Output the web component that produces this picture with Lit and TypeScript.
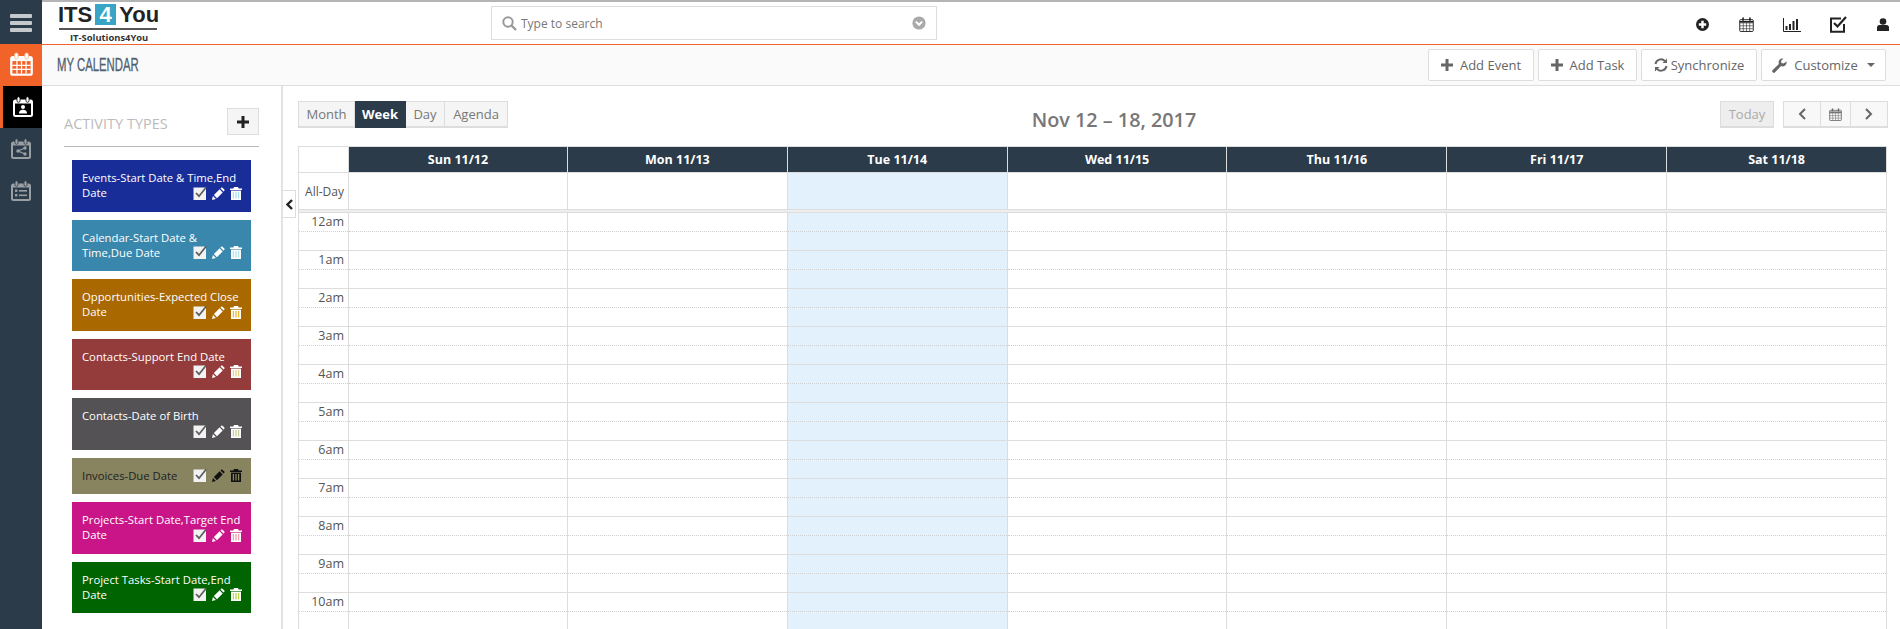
import { LitElement, html, css, svg } from "lit";
import { customElement } from "lit/decorators.js";

const calIcon = (inner: unknown, c: string, s = 22) => html`<svg width=${s} height=${s} viewBox="0 0 22 22" fill="none">
  <rect x="1" y="3.5" width="20" height="17.5" rx="2.5" fill=${c}></rect>
  <rect x="5" y="0.8" width="3" height="5.5" rx="1.5" fill=${c} stroke="currentColor" stroke-width=".8"></rect>
  <rect x="14" y="0.8" width="3" height="5.5" rx="1.5" fill=${c} stroke="currentColor" stroke-width=".8"></rect>
  ${inner}
</svg>`;

const gridInner = svg`<g fill="#f26329"><rect x="3" y="8" width="16" height="11"></rect></g>
  <g stroke="#fff" stroke-width="1.1"><path d="M7 8v11M11 8v11M15 8v11M3 11.7h16M3 15.3h16"></path></g>`;
const personInner = svg`<rect x="3" y="7.500" width="16" height="11.500" fill="#000"></rect>
  <circle cx="11" cy="11" r="2" fill="#fff"></circle><path d="M7 17.500c0-3 2-3.800 4-3.800s4 .8 4 3.800z" fill="#fff"></path>`;
const shareInner = svg`<rect x="3" y="7.500" width="16" height="11.500" fill="#2c3b49"></rect>
  <g stroke="#9a9fa4" stroke-width="1.200"><path d="M15 10l-7 3 7 3"></path></g>
  <circle cx="15" cy="10" r="1.700" fill="#9a9fa4"></circle><circle cx="8" cy="13" r="1.700" fill="#9a9fa4"></circle><circle cx="15" cy="16" r="1.700" fill="#9a9fa4"></circle>`;
const listInner = svg`<rect x="3" y="7.500" width="16" height="11.500" fill="#2c3b49"></rect>
  <g fill="#9a9fa4"><rect x="5" y="9.500" width="2.400" height="2.400"></rect><rect x="9" y="10" width="8" height="1.600"></rect>
  <rect x="5" y="14" width="2.400" height="2.400"></rect><rect x="9" y="14.500" width="8" height="1.600"></rect></g>`;

const plusIcon = (s = 12) => html`<svg width=${s} height=${s} viewBox="0 0 12 12"><path d="M4.500 0h3v4.500H12v3H7.500V12h-3V7.500H0v-3h4.500z" fill="currentColor"></path></svg>`;
const miniCal = (s: number, c = "currentColor") => html`<svg width=${s} height=${s} viewBox="0 0 14 14" fill="none" stroke=${c}>
  <path d="M1 5.500h12M4 5.500v8M7 5.500v8M10 5.500v8M1 8.200h12M1 10.900h12" stroke-width=".55"></path>
  <rect x=".7" y="2.500" width="12.600" height="11" rx=".8" stroke-width=".9"></rect>
  <path d="M.7 4.500h12.600" stroke-width="1.500"></path>
  <path d="M3.800 .5v3M10.200 .5v3" stroke-width="1.500"></path></svg>`;

const checkIcon = () => html`<svg class="ic" width="14" height="14" viewBox="0 0 14 14">
  <rect x="0.5" y="1.500" width="12.500" height="12.500" fill="#f2f2f2"></rect>
  <path d="M3 7l3 3.200L13.200 1.200" fill="none" stroke="#5c5c5c" stroke-width="1.700"></path></svg>`;
const pencilIcon = (c: string) => html`<svg class="ic" width="13" height="13" viewBox="0 0 14 14" fill=${c}>
  <path d="M0 14l1-4.200 3.200 3.200z"></path>
  <path d="M2 8.700l6.200-6.200 3.300 3.300-6.200 6.200z"></path>
  <path d="M9.100 1.600l.9-.9q.6-.6 1.200 0l2.100 2.100q.6.6 0 1.200l-.9.9z"></path></svg>`;
const trashIcon = (c: string, i: string) => html`<svg class="ic" width="12" height="13" viewBox="0 0 12 13">
  <path d="M4 0h4l.7 1.500H12V3H0V1.500h3.300z" fill=${c}></path>
  <path d="M1 3.600h10V13H1z" fill=${c}></path>
  <path d="M3.400 5v6.500M6 5v6.500M8.600 5v6.500" stroke=${i} stroke-width="1.300"></path></svg>`;

const types = [
  { t: "Events-Start Date & Time,End\nDate", bg: "#192d99", h: 52, fg: "#fff", tr: "#aee0ee" },
  { t: "Calendar-Start Date &\nTime,Due Date", bg: "#3a87ad", h: 51, fg: "#fff", tr: "#b5e3ea" },
  { t: "Opportunities-Expected Close\nDate", bg: "#a96800", h: 52, fg: "#fff", tr: "#e8b93a" },
  { t: "Contacts-Support End Date", bg: "#943b3b", h: 51, fg: "#fff", tr: "#e8cf90" },
  { t: "Contacts-Date of Birth", bg: "#545254", h: 52, fg: "#fff", tr: "#c5d09a" },
  { t: "Invoices-Due Date", bg: "#88845f", h: 36, fg: "#222", tr: "#88845f", dark: true },
  { t: "Projects-Start Date,Target End\nDate", bg: "#c91587", h: 52, fg: "#fff", tr: "#f0a0b0" },
  { t: "Project Tasks-Start Date,End\nDate", bg: "#006400", h: 51, fg: "#fff", tr: "#b7d84a" },
];
const days = ["Sun 11/12", "Mon 11/13", "Tue 11/14", "Wed 11/15", "Thu 11/16", "Fri 11/17", "Sat 11/18"];
const hours = ["12am", "1am", "2am", "3am", "4am", "5am", "6am", "7am", "8am", "9am", "10am"];

@customElement("app-root")
export class AppRoot extends LitElement {
  static styles = css`
    :host { display: block; width: 1900px; height: 629px; overflow: hidden; background: #fff;
      font-family: "Open Sans", sans-serif; color: #555; font-size: 12px; }
    * { box-sizing: border-box; }
    .page { display: grid; grid-template-columns: 42px 1fr; height: 629px; }
    .rail { background: #2c3b49; display: flex; flex-direction: column; padding-top: 2px; }
    .rail > div { height: 42px; display: flex; align-items: center; justify-content: center; }
    .burger { flex-direction: column; gap: 3px; }
    .burger i { display: block; width: 22px; height: 4px; border-radius: 1px; background: #c4c9cd; }
    .r-orange { background: #f26329; color: #f5b890; padding-bottom: 2px; }
    .r-active { background: #000; border-left: 3px solid #f26329; color: #000; }
    .r-dim { color: #2c3b49; }
    .main { display: flex; flex-direction: column; min-width: 0; }
    .top { height: 45px; border-top: 2px solid #b4b4b4; border-bottom: 1px solid #f26329; background: #fff;
      display: grid; grid-template-columns: 449px 446px 1fr; align-items: start; }
    .logo { padding: 2px 0 0 16px; display: flex; flex-direction: column; width: 125px; }
    .logo-main { display: flex; align-items: center; height: 21px; font: 700 22px "Liberation Sans", sans-serif; color: #222; }
    .four { background: #38a4c6; color: #fff; width: 21px; height: 21px; margin: 0 3px; display: flex; align-items: center; justify-content: center; }
    .logo-rule { width: 98px; height: 2px; background: #555; margin-top: 3px; margin-left: 1px; }
    .logo-sub { font: 700 9.4px/12px "Open Sans", sans-serif; color: #333; margin: 2px 0 0 12px; white-space: nowrap; }
    .search { margin-top: 4px; height: 34px; border: 1px solid #ddd; display: flex; align-items: center; padding: 0 10px; color: #777; font-size: 12px; }
    .q { color: #999; margin-right: 4px; display: flex; }
    .ph { flex: 1; }
    .tools { display: flex; justify-content: flex-end; align-items: center; color: #222; padding: 5px 11px 0 0; height: 40px; gap: 29px; }
    .tools > span { display: flex; justify-content: center; }
    .t-gap { margin-left: 1px; }
    .sub { height: 41px; background: #fafafa; border-bottom: 1px solid #ddd; display: flex; align-items: center; justify-content: space-between; padding-left: 15px; padding-right: 14px; }
    .sub h1 { margin: 0; font: 400 18px "Liberation Sans", sans-serif; color: #50606e; -webkit-text-stroke: .3px #50606e; transform: scaleX(.63); transform-origin: left center; white-space: nowrap; }
    .actions { display: flex; gap: 4px; }
    .btn { height: 32px; background: #fff; border: 1px solid #ddd; border-radius: 2px; display: flex; align-items: center; justify-content: center; font-size: 13px; color: #666; gap: 7px; }
    .b-event { width: 106px; } .b-task { width: 99px; } .b-sync { width: 116px; gap: 3px; } .b-cust { width: 125px; }
    .caret { margin-left: 2px; }
    .content { flex: 1; display: grid; grid-template-columns: 241px 1fr; min-height: 0; }
    .side { border-right: 2px solid #e3e3e3; padding: 22px 22px 0 22px; }
    .side-h { display: flex; justify-content: space-between; align-items: flex-start; height: 39px; border-bottom: 1px solid #bbb; }
    .side-h span { color: #bbb; font-size: 14.5px; line-height: 20px; margin-top: 6px; }
    .add { width: 32px; height: 27px; background: #f5f5f5; border: 1px solid #ddd; display: flex; align-items: center; justify-content: center; color: #222; }
    .cards { display: flex; flex-direction: column; gap: 8px; margin: 13px 8px 0; }
    .card { padding: 10px 0 0 10px; font-size: 11.3px; line-height: 15px; position: relative; white-space: pre; }
    .acts { position: absolute; right: 9px; bottom: 12px; display: flex; gap: 5px; align-items: flex-end; }
    .ic { display: block; }
    .cal { padding: 15px 12px 0 15px; min-width: 0; position: relative; }
    .toggle { position: absolute; left: 0; top: 104px; width: 13px; height: 28px; background: #fff; border: 1px solid #ddd; border-left: 0; display: flex; align-items: center; justify-content: center; color: #222; }
    .bar { display: grid; grid-template-columns: 1fr auto 1fr; grid-template-rows: 27px; align-items: start; margin-bottom: 18px; }
    .views { display: flex; }
    .v { height: 27px; background: #f5f5f5; border: 1px solid #ddd; border-bottom-width: 2px; border-left-width: 0; display: flex; align-items: center; justify-content: center; font-size: 13px; color: #777; }
    .v:first-child { border-left-width: 1px; }
    .v-month { width: 57px; } .v-week { width: 51px; } .v-day { width: 39px; } .v-agenda { width: 63px; }
    .v.on { background: #2c3b49; color: #fff; font-weight: 700; border-color: #2c3b49; }
    .title { font-size: 19.8px; line-height: 27px; color: #777; font-weight: 600; margin: 5px 0 0 42px; white-space: nowrap; }
    .right { display: flex; justify-content: flex-end; gap: 9px; }
    .today { width: 54px; height: 27px; background: #eee; border: 1px solid #ddd; border-bottom-width: 2px; color: #aaa; font-size: 13px; display: flex; align-items: center; justify-content: center; }
    .nav { display: flex; }
    .nav span { height: 27px; background: #f8f8f8; border: 1px solid #ddd; border-bottom-width: 2px; border-left-width: 0; display: flex; align-items: center; justify-content: center; color: #666; }
    .nav span:first-child { border-left-width: 1px; }
    .n-prev { width: 38px; } .n-cal { width: 30px; } .n-next { width: 37px; }
    .grid { border-top: 1px solid #ddd; border-left: 1px solid #ddd; display: grid; grid-template-columns: 50px 219px repeat(6, 1fr); width: 1589px; }
    .h { height: 26px; background: #2c3b49; color: #fff; font-weight: 700; font-size: 12.5px; display: flex; align-items: center; justify-content: center; border-right: 1px solid #ddd; border-bottom: 1px solid #ddd; }
    .corner { background: #fff; }
    .allday { height: 36px; border-right: 1px solid #ddd; }
    .allday.lbl { font-size: 12px; display: flex; align-items: center; justify-content: flex-end; padding-right: 4px; color: #555; }
    .sep { grid-column: 1 / -1; height: 4px; background: #eee; border-top: 1px solid #ddd; border-bottom: 1px solid #ddd; }
    .slot { height: 38px; border-right: 1px solid #ddd; border-bottom: 1px solid #ddd; position: relative; }
    .slot::after { content: ""; position: absolute; left: 0; right: 0; top: 18px; border-top: 1px dotted #d0d0d0; }
    .slot.lbl { text-align: right; padding-right: 4px; font-size: 12.5px; line-height: 17px; color: #555; }
    .today-col { background: #e3f1fd; }
  `;

  render() {
    return html`<div class="page">
      <nav class="rail">
        <div class="burger"><i></i><i></i><i></i></div>
        <div class="r-orange">${calIcon(gridInner, "#fff", 25)}</div>
        <div class="r-active">${calIcon(personInner, "#fff")}</div>
        <div class="r-dim">${calIcon(shareInner, "#9a9fa4")}</div>
        <div class="r-dim">${calIcon(listInner, "#9a9fa4")}</div>
      </nav>
      <div class="main">
        <header class="top">
          <div class="logo">
            <div class="logo-main">ITS<span class="four">4</span>You</div>
            <div class="logo-rule"></div>
            <div class="logo-sub">IT-Solutions4You</div>
          </div>
          <div class="search">
            <span class="q"><svg width="15" height="15" viewBox="0 0 15 15" fill="none" stroke="currentColor" stroke-width="2"><circle cx="6" cy="6" r="4.700"></circle><path d="M9.500 9.500l4.500 4.500" stroke-width="2.400"></path></svg></span>
            <span class="ph">Type to search</span>
            <svg width="14" height="14" viewBox="0 0 14 14"><circle cx="7" cy="7" r="6.600" fill="#aaa"></circle><path d="M3.800 5.600L7 8.800l3.200-3.200" fill="none" stroke="#fff" stroke-width="2"></path></svg>
          </div>
          <div class="tools">
            <span><svg width="13" height="13" viewBox="0 0 14 14"><circle cx="7" cy="7" r="7" fill="#222"></circle><path d="M5.700 3h2.600v2.700H11v2.600H8.300V11H5.700V8.300H3V5.700h2.700z" fill="#fff"></path></svg></span>
            <span class="t-gap">${miniCal(15, "#222")}</span>
            <span><svg width="18" height="15" viewBox="0 0 18 15" fill="none"><path d="M.5 1v13.500H18" stroke="#222"></path><path d="M3.500 9v4M7 7v6M10.500 4v9M14 2v11" stroke="#222" stroke-width="2"></path></svg></span>
            <span><svg width="17" height="17" viewBox="0 0 17 17" fill="none"><path d="M14 8v7.700H1V2.500h10" stroke="#222" stroke-width="2"></path><path d="M4 7l3.500 3.500L16 1" stroke="#222" stroke-width="2.200"></path></svg></span>
            <span class="t-gap"><svg width="12" height="13" viewBox="0 0 12 13"><circle cx="6" cy="3.500" r="3.300" fill="#222"></circle><path d="M0 13V9.500Q0 7 2.500 7h7Q12 7 12 9.500V13z" fill="#222"></path></svg></span>
          </div>
        </header>
        <div class="sub">
          <h1>MY CALENDAR</h1>
          <div class="actions">
            <div class="btn b-event">${plusIcon(12)}Add Event</div>
            <div class="btn b-task">${plusIcon(12)}Add Task</div>
            <div class="btn b-sync"><svg width="14" height="14" viewBox="0 0 14 14" fill="none" stroke="currentColor" stroke-width="2"><path d="M1.500 6A5.500 5.500 0 0 1 11 3.200M12.500 8A5.500 5.500 0 0 1 3 10.800"></path><path d="M13 .5v4.500H8.500zM1 13.500V9h4.500z" fill="currentColor" stroke="none"></path></svg>Synchronize</div>
            <div class="btn b-cust"><svg width="15" height="15" viewBox="0 0 15 15"><path d="M14.500 3.500a4 4 0 0 1-5.400 4.600L3 14.300a1.500 1.500 0 0 1-2.300-2.200L6.900 5.900A4 4 0 0 1 11.500.5L9 3l.5 2 2 .5z" fill="currentColor"></path></svg>Customize<svg class="caret" width="8" height="4" viewBox="0 0 8 4"><path d="M0 0h8L4 4z" fill="currentColor"></path></svg></div>
          </div>
        </div>
        <div class="content">
          <aside class="side">
            <div class="side-h"><span>ACTIVITY TYPES</span><div class="add">${plusIcon(12)}</div></div>
            <div class="cards">
              ${types.map((c) => html`<div class="card" style="background:${c.bg};color:${c.fg};height:${c.h}px">${c.t}<div class="acts">${checkIcon()}${pencilIcon(c.dark ? "#111" : "#fff")}${trashIcon(c.dark ? "#111" : "#fff", c.tr)}</div></div>`)}
            </div>
          </aside>
          <section class="cal">
            <div class="toggle"><svg width="7" height="11" viewBox="0 0 7 11" fill="none" stroke="currentColor" stroke-width="2.400"><path d="M6 1L1.500 5.500 6 10"></path></svg></div>
            <div class="bar">
              <div class="views"><div class="v v-month">Month</div><div class="v v-week on">Week</div><div class="v v-day">Day</div><div class="v v-agenda">Agenda</div></div>
              <div class="title">Nov 12 – 18, 2017</div>
              <div class="right">
                <div class="today">Today</div>
                <div class="nav">
                  <span class="n-prev"><svg width="8" height="12" viewBox="0 0 8 12" fill="none" stroke="currentColor" stroke-width="2"><path d="M7 1L2 6l5 5"></path></svg></span>
                  <span class="n-cal">${miniCal(13)}</span>
                  <span class="n-next"><svg width="8" height="12" viewBox="0 0 8 12" fill="none" stroke="currentColor" stroke-width="2"><path d="M1 1l5 5-5 5"></path></svg></span>
                </div>
              </div>
            </div>
            <div class="grid">
              <div class="h corner"></div>
              ${days.map((d) => html`<div class="h">${d}</div>`)}
              <div class="allday lbl">All-Day</div>
              ${days.map((_, i) => html`<div class="allday ${i === 2 ? "today-col" : ""}"></div>`)}
              <div class="sep"></div>
              ${hours.map((h) => html`<div class="slot lbl">${h}</div>${days.map((_, i) => html`<div class="slot ${i === 2 ? "today-col" : ""}"></div>`)}`)}
            </div>
          </section>
        </div>
      </div>
    </div>`;
  }
}
